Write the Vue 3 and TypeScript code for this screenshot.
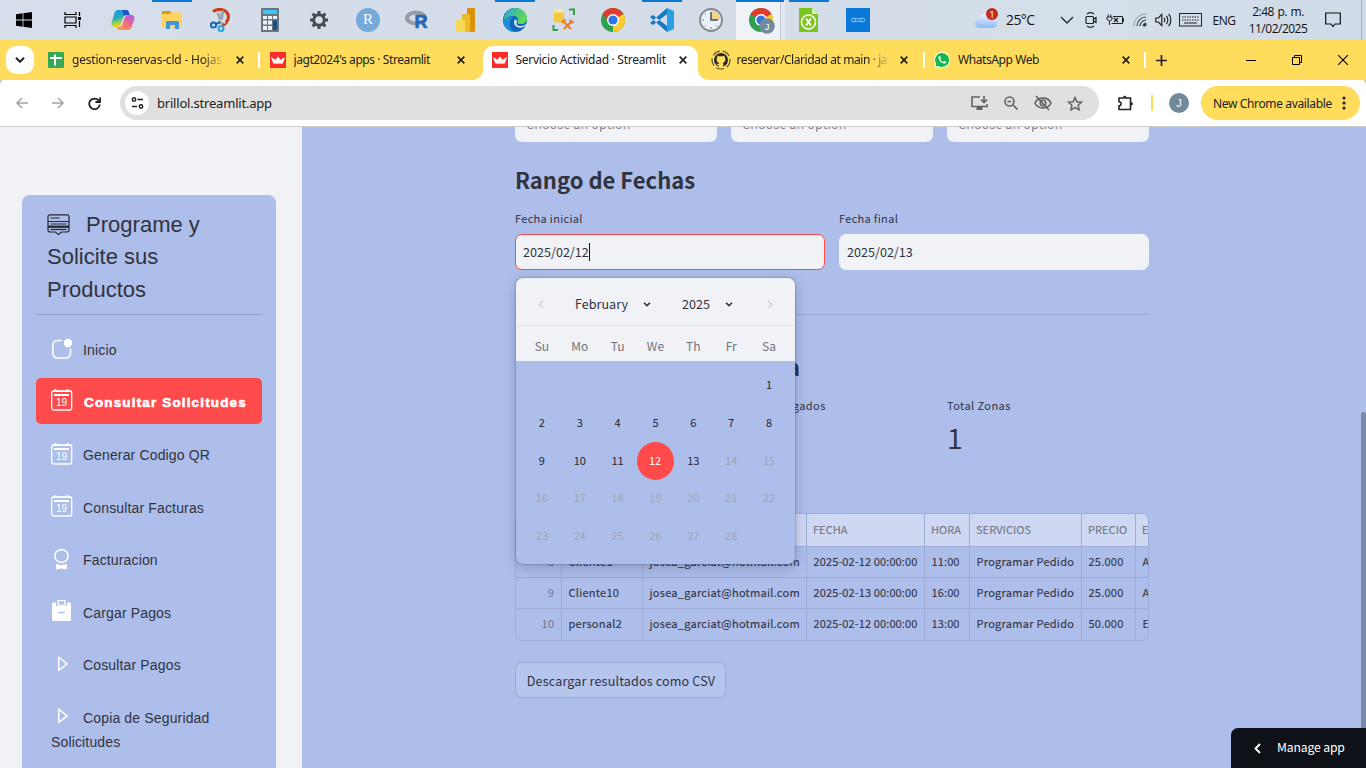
<script setup lang="ts">
interface Tab { title: string; icon: 'sheets' | 'streamlit' | 'github' | 'whatsapp'; active?: boolean; fade?: boolean }
interface MenuItem { label: string; icon: 'app' | 'date' | 'award' | 'clip' | 'play'; active?: boolean }

const tabs: Tab[] = [
  { title: 'gestion-reservas-cld - Hojas', icon: 'sheets', fade: true },
  { title: "jagt2024's apps · Streamlit", icon: 'streamlit' },
  { title: 'Servicio Actividad · Streamlit', icon: 'streamlit', active: true },
  { title: 'reservar/Claridad at main · ja', icon: 'github', fade: true },
  { title: 'WhatsApp Web', icon: 'whatsapp' },
]

const menu: MenuItem[] = [
  { label: 'Inicio', icon: 'app' },
  { label: 'Consultar Solicitudes', icon: 'date', active: true },
  { label: 'Generar Codigo QR', icon: 'date' },
  { label: 'Consultar Facturas', icon: 'date' },
  { label: 'Facturacion', icon: 'award' },
  { label: 'Cargar Pagos', icon: 'clip' },
  { label: 'Cosultar Pagos', icon: 'play' },
  { label: 'Copia de Seguridad Solicitudes', icon: 'play' },
]

const weekdays = ['Su', 'Mo', 'Tu', 'We', 'Th', 'Fr', 'Sa']
const blanks = 6
const days = Array.from({ length: 28 }, (_, i) => i + 1)

const headers = ['', 'NOMBRE', 'EMAIL', 'FECHA', 'HORA', 'SERVICIOS', 'PRECIO', 'ESTADO']
const rows = [
  ['8', 'Cliente1', 'josea_garciat@hotmail.com', '2025-02-12 00:00:00', '11:00', 'Programar Pedido', '25.000', 'A'],
  ['9', 'Cliente10', 'josea_garciat@hotmail.com', '2025-02-13 00:00:00', '16:00', 'Programar Pedido', '25.000', 'A'],
  ['10', 'personal2', 'josea_garciat@hotmail.com', '2025-02-12 00:00:00', '13:00', 'Programar Pedido', '50.000', 'E'],
]
</script>

<template>
  <div class="screen">
    <header class="taskbar">
      <div class="launch start">
        <svg width="16" height="16" viewBox="0 0 16 16"><path d="M0 2.2 6.6 1.3V7.5H0zM7.4 1.2 16 0V7.5H7.4zM0 8.4H6.6V14.7L0 13.8zM7.4 8.4H16V16L7.4 14.8z" fill="#000" /></svg>
      </div>
      <div class="launch view">
        <svg width="18" height="16" viewBox="0 0 18 16" fill="none" stroke="#000" stroke-width="1.2"><path d="M1 0V2.5H12V0M1 16V13.5H12V16M1 5H12V11H1zM15.5 0V4M15.5 9V15" /><path d="M14 5h3v3h-3z" fill="#000" stroke="none" /></svg>
      </div>
      <div class="launch">
        <svg width="24" height="24" viewBox="0 0 24 24">
          <defs>
            <linearGradient id="cpA" x1="0" y1="0" x2=".3" y2="1"><stop offset="0" stop-color="#1596e8" /><stop offset=".5" stop-color="#28a8c0" /><stop offset=".75" stop-color="#8fd04e" /><stop offset="1" stop-color="#ffd21f" /></linearGradient>
            <linearGradient id="cpB" x1=".8" y1="0" x2=".2" y2="1"><stop offset="0" stop-color="#b45be8" /><stop offset=".5" stop-color="#f06a86" /><stop offset="1" stop-color="#ff9a4a" /></linearGradient>
          </defs>
          <path d="M7 2h8c2 0 2.500 1 3 3l.6 2h-3c-2 0-3 1-3.600 3l-2 6c-.6 2-1.600 3-3.500 3H4c-2.500 0-4-2-3.200-5L3.500 5C4.200 3 5.200 2 7 2z" fill="url(#cpA)" />
          <path d="M17 22H9c-2 0-2.500-1-3-3h2c2 0 3-1 3.600-3l2-6c.6-2 1.600-3 3.400-3h3c2.500 0 4 2 3.200 5L20.500 19c-.7 2-1.700 3-3.500 3z" fill="url(#cpB)" />
          <path d="M11 2h4c2 0 2.500 1 3 3l.6 2h-3c-2 0-2 .5-2.600 1z" fill="#1953c4" />
        </svg>
      </div>
      <div class="launch running">
        <svg width="24" height="24" viewBox="0 0 24 24"><path d="M2 3h8l2 2v2H2z" fill="#dd9b10" /><path d="M2 6h7l2-1.500h11V20H2z" fill="#ffd45e" /><path d="M6 20v-6l1-1h11l1 1v7h-4v-4h-5v4H6z" fill="#3d94dc" /></svg>
      </div>
      <div class="launch">
        <svg width="24" height="24" viewBox="0 0 24 24" fill="none"><path d="M4 3.500c3-2 7-2.500 10-1.500 5 1.500 6.500 6 4.500 10.500-1 2-3 4-5 5" stroke="#c93c17" stroke-width="3" /><path d="M9 5l4 11M14 2.500L11.500 16" stroke="#9aa3ad" stroke-width="3" /><path d="M11.500 12l5 3" stroke="#d9dee4" stroke-width="2" /><circle cx="4.500" cy="17" r="2.600" stroke="#1768b5" stroke-width="2" /><path d="M7 16l4-2" stroke="#1768b5" stroke-width="2" /><circle cx="12" cy="20.500" r="2.500" stroke="#29a3e0" stroke-width="2" /></svg>
      </div>
      <div class="launch">
        <svg width="18" height="24" viewBox="0 0 18 24"><rect width="18" height="24" rx="1" fill="#68747f" /><path d="M2 2h14v4H2z" fill="#3ec6f2" /><path d="M2 8h4v3H2zM7 8h4v3H7zM12 8h4v3h-4zM2 12.500h4v4H2zM7 12.500h4v4H7zM2 18h4v4H2zM7 18h4v4H7z" fill="#eef1f4" /><path d="M12 12.500h4V22h-4z" fill="#164e87" /></svg>
      </div>
      <div class="launch">
        <svg width="20" height="20" viewBox="0 0 20 20" fill="none" stroke="#474b50"><circle cx="10" cy="10" r="5.300" stroke-width="3" /><path d="M10 1v3M10 16v3M1 10h3M16 10h3M3.600 3.600l2.200 2.200M14.200 14.200l2.200 2.200M3.600 16.400l2.200-2.200M14.200 5.800l2.200-2.200" stroke-width="3" /></svg>
      </div>
      <div class="launch"><span class="rstudio">R</span></div>
      <div class="launch">
        <svg width="24" height="22" viewBox="0 0 24 22"><ellipse cx="11" cy="9" rx="9" ry="5.500" fill="none" stroke="#969ca5" stroke-width="4" /><text x="9.500" y="19" font-family="Liberation Sans, sans-serif" font-weight="700" font-size="18" fill="#2468bd" stroke="#2468bd" stroke-width=".7">R</text></svg>
      </div>
      <div class="launch">
        <svg width="20" height="24" viewBox="0 0 20 24"><rect x="11" width="8" height="24" rx="1" fill="#d99309" /><rect x="6" y="6" width="8" height="18" rx="1" fill="#eebb28" /><rect y="12" width="9" height="12" rx="1" fill="#f9d858" /></svg>
      </div>
      <div class="launch running">
        <svg width="24" height="24" viewBox="0 0 24 24">
          <defs><linearGradient id="edA" x1="0" y1="0" x2="1" y2=".4"><stop offset="0" stop-color="#22a8d8" /><stop offset="1" stop-color="#62da56" /></linearGradient></defs>
          <circle cx="12" cy="12" r="12" fill="#0f65bb" /><path d="M1 9C3 2 8 0 12 0c7 0 12 5 12 10 0 4-3 6-6 6-2 0-4-.7-3.500-2 1.500-2 .5-6-4-6C6 8 1 10 0 15z" fill="url(#edA)" /><path d="M8 12c-3 4-1 10 5 12-7 0-12-4-13-10 1-4 6-6 10-5-1 1-2 2-2 3z" fill="#1c8fd8" /><path d="M24 14c-1 3-3 4-6 4-3 0-5-1-4.500-3 .8-1.200.5-3-1-4-2 1.500-2 5 0 7 3 2.500 7 2 10.500-.5z" fill="#d9e4ef" />
        </svg>
      </div>
      <div class="launch">
        <svg width="24" height="24" viewBox="0 0 24 24" fill="none"><path d="M2 3v10c0 2 10 2 10 0V3z" fill="#f5c93b" /><ellipse cx="7" cy="3" rx="5" ry="2" fill="#ffe79a" /><path d="M17 1.500h5V7M6 22H1.500v-5" stroke="#35a04a" stroke-width="2" /><path d="M11 13l8 8M20 13l-8 8" stroke="#ef7a20" stroke-width="2" /><path d="M9.500 14.500l4-3M18 11.500l1 2.500 3 .5" stroke="#ef7a20" stroke-width="2" /></svg>
      </div>
      <div class="launch">
        <svg width="24" height="24" viewBox="0 0 24 24"><circle cx="12" cy="12" r="12" fill="#2fa14e" /><path d="M12 12 1.600 6A12 12 0 0 1 22.400 6z" fill="#e33b2e" /><path d="M12 12 22.400 6A12 12 0 0 1 12 24z" fill="#fccb2f" /><path d="M12 12H6.500L1.600 6z" fill="#e33b2e" /><circle cx="12" cy="12" r="6" fill="#fff" /><circle cx="12" cy="12" r="4.600" fill="#2f75e8" /></svg>
      </div>
      <div class="launch running">
        <svg width="24" height="24" viewBox="0 0 24 24"><path d="M17 0l7 3v18l-7 3z" fill="#2b9fe6" /><path d="M17 0v6L3 17l-3-2z M17 24v-6L3 7 0 9z" fill="#1479c2" /></svg>
      </div>
      <div class="launch">
        <svg width="24" height="24" viewBox="0 0 24 24"><circle cx="12" cy="12" r="11" fill="#e9f0f7" stroke="#86898c" stroke-width="1.800" /><path d="M12 12V2.500a9.500 9.500 0 0 1 9.500 9.500z" fill="#f1d383" /><path d="M12 4v8h7" stroke="#46566b" stroke-width="1.500" fill="none" /><path d="M12 21v-2M3 12h2M5.500 5.500l1 1M5.500 18.500l1-1M18.500 18.500l-1-1" stroke="#6d7681" /></svg>
      </div>
      <div class="launch running current">
        <svg width="26" height="28" viewBox="0 0 26 28"><circle cx="12" cy="14" r="12" fill="#2fa14e" /><path d="M12 14 1.600 8A12 12 0 0 1 22.400 8z" fill="#e33b2e" /><path d="M12 14 22.400 8A12 12 0 0 1 12 26z" fill="#fccb2f" /><circle cx="12" cy="14" r="6" fill="#fff" /><circle cx="12" cy="14" r="4.600" fill="#2f75e8" /><circle cx="18" cy="20" r="7.800" fill="#71899a" /><text x="18" y="23.500" text-anchor="middle" font-family="Liberation Sans, sans-serif" font-size="9.500" fill="#fff">J</text></svg>
      </div>
      <div class="launch running">
        <svg width="20" height="24" viewBox="0 0 20 24"><path d="M0 0h13l6 6v18H0z" fill="#7bc51f" /><path d="M13 0l6 6h-6z" fill="#d8efb9" /><circle cx="9.500" cy="14" r="7" fill="none" stroke="#fff" stroke-width="1.500" /><path d="M7 10.500l5 7M12 10.500l-5 7" stroke="#fff" stroke-width="1.800" /></svg>
      </div>
      <div class="launch">
        <svg width="24" height="24" viewBox="0 0 24 24"><path d="M0 0h24v24H0z" fill="#0a78d8" /><g fill="none" stroke="#a8d2f5" stroke-width=".8"><circle cx="7.300" cy="12" r="1.900" /><circle cx="16.700" cy="12" r="1.900" /><path d="M8 10.200q4 1.500 8 0M8 13.800q4-1.500 8 0" /></g></svg>
      </div>

      <div class="tray">
        <svg width="26" height="24" viewBox="0 0 26 24"><defs><linearGradient id="cl" x1="0" y1="0" x2="0" y2="1"><stop offset="0" stop-color="#eaf3ff" /><stop offset="1" stop-color="#8fb9f2" /></linearGradient></defs><path d="M5 20a5 5 0 0 1 0-9 7 7 0 0 1 12-3c3-1 6 2 5 5 3 1 3 7-2 7z" fill="url(#cl)" /><circle cx="19" cy="6" r="6" fill="#c42b1f" /><text x="19" y="9.500" text-anchor="middle" font-family="Open Sans, sans-serif" font-size="9.500" fill="#fff">1</text></svg>
        <span class="temp">25°C</span>
        <svg width="14" height="8" viewBox="0 0 14 8" fill="none" stroke="#222" stroke-width="1.300"><path d="M1 1l6 6 6-6" /></svg>
        <svg width="14" height="16" viewBox="0 0 14 16" fill="none" stroke="#222" stroke-width="1.200"><rect x="2" y="4.500" width="7.500" height="7" rx="1" /><path d="M9.500 7l2.500-1.500v5L9.500 9M3 2c2-1.500 5-1.500 7 0M3 14c2 1.500 5 1.500 7 0" /></svg>
        <svg width="18" height="12" viewBox="0 0 18 12" fill="none" stroke="#222"><path d="M1 3h5v2.500L3.500 7 1 5.500zM2.200 3V.5M4.800 3V.5M3.500 7v4M7 2.500h9.500v7H5.500M16.500 4.500h1v3h-1" stroke-width="1" /><path d="M8 4l4 4M12 4L8 8" stroke-width="1.300" /></svg>
        <svg width="14" height="14" viewBox="0 0 14 14" fill="none" stroke="#555"><path d="M1 13C1 6 6 1 13 1" stroke="#999" /><path d="M4 13c0-5 4-9 9-9M7 13c0-3 3-6 6-6" stroke="#444" stroke-width="1.200" /><path d="M10 13c0-2 1-3 3-3v3z" fill="#222" /></svg>
        <svg width="17" height="14" viewBox="0 0 17 14" fill="none" stroke="#222" stroke-width="1.200"><path d="M.8 5h2.500l3.500-3.500v11L3.300 9H.8zM9 5c1 1 1 3 0 4M11.300 3c2 2 2 6 0 8M13.600 1c3 3 3 9 0 12" /></svg>
        <svg width="23" height="14" viewBox="0 0 23 14" fill="none" stroke="#222"><rect x=".5" y=".5" width="22" height="12.500" /><path d="M3 4h17M3 7h17" stroke-dasharray="1.500 1" /><path d="M5 10h13" /></svg>
        <span class="lang">ENG</span>
        <div class="clock"><span class="time">2:48 p. m.</span><span>11/02/2025</span></div>
        <svg width="16" height="16" viewBox="0 0 16 16" fill="none" stroke="#111" stroke-width="1.200"><path d="M.7 1h14.600v11H10l-2 2.500L6 12H.7z" /></svg>
      </div>
    </header>

    <div class="tabstrip">
      <button class="search-tabs"><svg width="10" height="6" viewBox="0 0 10 6" fill="none" stroke="#222" stroke-width="2"><path d="M1 .8l4 4 4-4" /></svg></button>
      <div v-for="tab in tabs" :key="tab.title" class="tab" :class="[tab.icon, { active: tab.active }]">
        <svg v-if="tab.icon === 'sheets'" class="fav" width="16" height="16" viewBox="0 0 16 16"><rect width="16" height="16" rx="1" fill="#34a853" /><path d="M2 6h12M7 2.500v11" stroke="#fff" stroke-width="2" /></svg>
        <svg v-else-if="tab.icon === 'streamlit'" class="fav" width="16" height="16" viewBox="0 0 16 16"><path d="M0 0h16v16H0z" fill="#ff2b2b" /><path d="M1 5.300l4.700 2.400L8 4.500l2.300 3.200L15 5.300 12.600 11.500H3.400z" fill="#ffd9d9" /><path d="M8 4.500l2.300 3.200L8 9 5.700 7.700zM1 5.300l7 4.200 7-4.200-2.400 6.200H3.400z" fill="#fff" opacity=".75" /></svg>
        <svg v-else-if="tab.icon === 'github'" class="fav gh" width="20" height="20" viewBox="0 0 20 20"><circle cx="10" cy="10" r="9" fill="none" stroke="#5c5430" stroke-width="1.200" stroke-dasharray="8 3" /><circle cx="10" cy="10" r="7" fill="#24292f" /><path d="M7.700 18v-3c-2 .3-2-1.500-3-1.500 1-.3 2 1 3 .5l.5-1C5.500 12.500 5 8.500 6.300 7.500l.2-2L8.200 6.300h3.600l1.700-.8.2 2c1.300 1 .8 5-1.900 5.500l.5 1.500V18z" fill="#ffdc5c" /></svg>
        <svg v-else class="fav" width="16" height="16" viewBox="0 0 16 16"><path d="M8 0a8 8 0 1 1-4 14.900L0 16l1.200-4A8 8 0 0 1 8 0z" fill="#fff" /><path d="M8 1a7 7 0 1 1-3.700 12.900L1.400 14.600l.8-2.800A7 7 0 0 1 8 1z" fill="#12b94b" /><path d="M5 4c-2 2 2 8 6 7.500 1.500-.5 1-2 .5-2L10 9l-1 1C7.500 9.500 6.500 8 6.500 7.500L7 6.500 6.300 4.500C6 4 5.500 3.800 5 4z" fill="#fff" /></svg>
        <span class="title" :class="{ fade: tab.fade }">{{ tab.title }}</span>
        <svg class="close" width="8" height="8" viewBox="0 0 8 8" stroke="#222" stroke-width="1.700"><path d="M.7.7l6.600 6.600M7.300.7L.7 7.300" /></svg>
      </div>
      <svg class="plus" width="11" height="11" viewBox="0 0 11 11" stroke="#222" stroke-width="1.700"><path d="M5.500 0v11M0 5.500h11" /></svg>
      <div class="window">
        <svg width="10" height="10" viewBox="0 0 10 10" stroke="#000"><path d="M0 5.500h10" /></svg>
        <svg width="10" height="10" viewBox="0 0 10 10" fill="none" stroke="#000"><path d="M.5 2.500h7v7h-7zM2.500 2.500v-2h7v7h-2" /></svg>
        <svg width="10" height="10" viewBox="0 0 10 10" stroke="#000" stroke-width="1.100"><path d="M0 0l10 10M10 0L0 10" /></svg>
      </div>
    </div>

    <div class="toolbar">
      <div class="nav">
        <svg width="12" height="12" viewBox="0 0 12 12" fill="none" stroke="#a2a2a2" stroke-width="1.500"><path d="M12 6H1M6 1L1 6l5 5" /></svg>
        <svg width="12" height="12" viewBox="0 0 12 12" fill="none" stroke="#a2a2a2" stroke-width="1.500"><path d="M0 6h11M6 1l5 5-5 5" /></svg>
        <svg width="13" height="13" viewBox="0 0 13 13" fill="none" stroke="#222" stroke-width="1.800"><path d="M11 4A5.300 5.300 0 1 0 11.800 7.500" /><path d="M12 .5V5H7.500" /></svg>
      </div>
      <div class="omnibox">
        <span class="site"><svg width="13" height="12" viewBox="0 0 13 12" fill="none" stroke="#222" stroke-width="1.500"><circle cx="3" cy="2.500" r="1.700" /><path d="M6.500 2.500H12M1 9.500h5" /><circle cx="10" cy="9.500" r="1.700" /></svg></span>
        <span class="url">brillol.streamlit.app</span>
        <div class="actions">
          <svg width="17" height="16" viewBox="0 0 17 16" fill="none" stroke="#606266" stroke-width="1.600"><path d="M9 2H1v9.500h15V9" /><path d="M5.500 13.500h6" stroke-width="3" /><path d="M13 1v6M10 4.500l3 3 3-3" /></svg>
          <svg width="14" height="14" viewBox="0 0 14 14" fill="none" stroke="#606266" stroke-width="1.600"><circle cx="5.500" cy="5.500" r="4.500" /><path d="M3.500 5.500h4M9 9l4.500 4.500" /></svg>
          <svg width="18" height="16" viewBox="0 0 18 16" fill="none" stroke="#606266" stroke-width="1.600"><path d="M1 8c3-6.500 13-6.500 16 0-3 6.500-13 6.500-16 0z" /><circle cx="9" cy="8" r="2.800" /><path d="M2 1l13 14" /></svg>
          <svg width="16" height="15" viewBox="0 0 16 15" fill="none" stroke="#606266" stroke-width="1.500"><path d="M8 1.500l1.900 4.200 4.600.5-3.400 3.100 1 4.500L8 11.500l-4.100 2.300 1-4.500L1.500 6.200l4.600-.5z" /></svg>
        </div>
      </div>
      <svg class="ext" width="17" height="17" viewBox="0 0 17 17" fill="none" stroke="#222" stroke-width="1.600"><path d="M2 3h11.500v11.500H2v-3.800c2.800 0 2.800-4 0-4z" /><path d="M6 2.500c0-2.500 3.500-2.500 3.500 0zM14 7c2.500 0 2.500 3.500 0 3.500z" fill="#222" stroke="none" /></svg>
      <span class="bar"></span>
      <span class="avatar">J</span>
      <div class="update"><span>New Chrome available</span><svg width="4" height="14" viewBox="0 0 4 14" fill="#222"><circle cx="2" cy="2" r="1.600" /><circle cx="2" cy="7" r="1.600" /><circle cx="2" cy="12" r="1.600" /></svg></div>
    </div>

    <div class="page">
      <aside class="sidebar">
        <nav class="menu">
          <h1>
            <svg width="23" height="22" viewBox="0 0 23 22" fill="none" stroke="#262730" stroke-width="1.200"><path d="M3 .8h17q2 0 2 2V16q0 2-2 2h-5.500L11.500 20.500 8.500 18H3q-2 0-2-2V2.800q0-2 2-2zM3.500 4h9M1 7.500h21M3.500 10h16M1 13.200h21" /><path d="M1 12.500h21" stroke-width="1.800" /><path d="M3.500 15.500h16" /></svg>
            Programe y Solicite sus Productos
          </h1>
          <hr />
          <a v-for="item in menu" :key="item.label" class="item" :class="{ active: item.active }">
            <svg v-if="item.icon === 'app'" class="ico" width="22" height="22" viewBox="0 0 22 22"><path d="M11 2.500H7Q1.800 2.500 1.800 7.500v7q0 5.500 5.200 5.500h7.500q5 0 5-5.500v-4" fill="none" stroke="#fff" stroke-width="1.600" /><circle cx="17" cy="5" r="4.200" fill="#fff" /></svg>
            <svg v-else-if="item.icon === 'date'" class="ico" width="22" height="22" viewBox="0 0 22 22"><rect x=".7" y="2" width="20" height="19" rx="2" fill="none" stroke="#fff" stroke-width="1.300" /><path d="M4.500 0v2M16.500 0v2" stroke="#fff" stroke-width="1.500" /><path d="M1 2.300h19.500" stroke="#fff" stroke-width="1.400" /><path d="M3 6h15" stroke="#fff" stroke-width="2" /><text x="10.500" y="17.200" text-anchor="middle" font-family="Liberation Sans, sans-serif" font-size="10" fill="#fff">19</text></svg>
            <svg v-else-if="item.icon === 'award'" class="ico" width="22" height="22" viewBox="0 0 22 22"><path d="M10.500 1.500l3 .8 2.600 1.900 1 3-.2 3-2 2.700-4.400 1.900-4.400-1.900-2-2.700-.2-3 1-3 2.600-1.900z" fill="none" stroke="#fff" stroke-width="1.500" /><path d="M5 16l5.500 1.200L16 16v5.500l-5.500-1-5.500 1z" fill="#fff" /></svg>
            <svg v-else-if="item.icon === 'clip'" class="ico" width="22" height="22" viewBox="0 0 22 22"><path d="M1 4q0-1.500 1.500-1.500H5V6h11V2.500h2.500Q20 2.500 20 4v15.500q0 1.500-1.500 1.500h-16Q1 21 1 19.500z" fill="#fff" /><path d="M7 .7h7v4.500H7z" fill="#adbeea" stroke="#fff" stroke-width="1.300" /><path d="M7 12.500h7" stroke="#adbeea" stroke-width="1.300" /></svg>
            <svg v-else class="ico" width="22" height="22" viewBox="0 0 22 22"><path d="M7.700 4v13.500l8.300-6.700z" fill="none" stroke="#fff" stroke-width="1.500" stroke-linejoin="round" /></svg>
            <span class="text">{{ item.label }}</span>
          </a>
        </nav>
      </aside>

      <main class="main">
        <div class="three">
          <div v-for="n in 3" :key="n" class="select"><span>Choose an option</span><svg width="8" height="6" viewBox="0 0 8 6" fill="none" stroke="#555" stroke-width="1.500"><path d="M1 1l3 3 3-3" /></svg></div>
        </div>
        <h3>Rango de Fechas</h3>
        <div class="two">
          <label>Fecha inicial<span class="input focus">2025/02/12<i class="caret"></i></span></label>
          <label>Fecha final<span class="input">2025/02/13</span></label>
        </div>
        <hr class="rule" />
        <h3 class="summary">Resumen de la Consulta</h3>
        <div class="three metrics">
          <div></div>
          <div class="metric"><span class="label">Total Encargados</span></div>
          <div class="metric"><span class="label">Total Zonas</span><span class="value">1</span></div>
        </div>
        <div class="table">
          <div class="tr head"><span v-for="h in headers" :key="h">{{ h }}</span></div>
          <div v-for="row in rows" :key="row[0]" class="tr"><span v-for="(cell, c) in row" :key="c">{{ cell }}</span></div>
        </div>
        <button class="download">Descargar resultados como CSV</button>

        <div class="calendar">
          <div class="cal-head">
            <svg width="6" height="9" viewBox="0 0 6 9" fill="none" stroke="#d3d6e2" stroke-width="1.700"><path d="M5 .8L1.200 4.500 5 8.200" /></svg>
            <span class="month">February</span>
            <svg class="dd" width="8" height="5" viewBox="0 0 8 5" fill="none" stroke="#31333f" stroke-width="1.500"><path d="M1 .8l3 2.800 3-2.800" /></svg>
            <span class="year">2025</span>
            <svg class="dd" width="8" height="5" viewBox="0 0 8 5" fill="none" stroke="#31333f" stroke-width="1.500"><path d="M1 .8l3 2.800 3-2.800" /></svg>
            <svg class="next" width="6" height="9" viewBox="0 0 6 9" fill="none" stroke="#d3d6e2" stroke-width="1.700"><path d="M1 .8l3.800 3.700L1 8.200" /></svg>
          </div>
          <div class="week"><span v-for="d in weekdays" :key="d">{{ d }}</span></div>
          <div class="days">
            <span v-for="b in blanks" :key="'b' + b"></span>
            <span v-for="d in days" :key="d" :class="{ off: d > 13, sel: d === 12 }">{{ d }}</span>
          </div>
        </div>
      </main>
      <div class="scrollbar"></div>
      <button class="manage"><svg width="7" height="11" viewBox="0 0 7 11" fill="none" stroke="#fff" stroke-width="1.900"><path d="M6 1L1.500 5.500 6 10" /></svg><span>Manage app</span></button>
    </div>
  </div>
</template>

<style>
body { margin: 0; overflow: hidden; }
</style>

<style scoped>
* { box-sizing: border-box; }
.screen { width: 1366px; height: 768px; display: flex; flex-direction: column; overflow: hidden; background: #adbeea; font-family: "Noto Sans CJK SC", "Open Sans", sans-serif; color: #31333f; }
svg { display: block; flex: none; }
button { border: 0; padding: 0; font: inherit; color: inherit; }

.taskbar { flex: none; height: 40px; display: flex; background: linear-gradient(90deg, #d5deea, #d3dce7 50%, #d5dfea 80%, #cfdbe8); font-family: "Open Sans", sans-serif; color: #111; }
.launch { position: relative; flex: none; width: 49px; height: 40px; display: flex; align-items: center; justify-content: center; }
.launch.start { width: 48px; }
.launch.view { width: 50.500px; }
.running::before { content: ""; position: absolute; top: 0; left: 4px; width: 40px; height: 2px; background: #0b78d4; }
.current { padding-left: 3px; background: linear-gradient(90deg, #eff2f6 44px, #c3cad4 44px, #c3cad4 45px, #e2e8ef 45px); }
.current::before { left: 0; width: 48px; }
.rstudio { width: 24px; height: 24px; border-radius: 50%; background: #75aadb; color: #fff; font: 15px/23px "Liberation Serif", serif; text-align: center; }
.tray { margin-left: auto; width: 394px; height: 40px; display: grid; grid-template-columns: 28px 54px 26px 22px 26px 24px 22px 32px 36px 72px 38px; justify-content: start; align-items: center; justify-items: center; background: linear-gradient(#a9b5c3, #a9b5c3) 389px 0 / 1px 40px no-repeat; }
.temp { justify-self: start; padding-left: 6px; font-size: 14px; letter-spacing: -.6px; line-height: 20px; }
.lang { font-size: 12px; letter-spacing: -.5px; }
.clock { display: flex; flex-direction: column; align-items: center; font-size: 12px; line-height: 17.500px; letter-spacing: -.5px; white-space: nowrap; }
.time { word-spacing: 1px; }

.tabstrip { flex: none; height: 40px; display: flex; align-items: center; background: #ffdc5c; font-family: "Noto Sans", sans-serif; font-size: 12px; color: #222; }
.search-tabs { width: 28px; height: 28px; margin: 0 6px; border-radius: 10px; background: #fff; display: flex; align-items: center; justify-content: center; }
.tab { position: relative; flex: none; width: 221.500px; height: 34px; margin-top: 6px; padding: 0 0 6px 8px; display: flex; align-items: center; }
.tab .title { margin-left: 8px; width: 152px; overflow: hidden; white-space: nowrap; line-height: 20px; letter-spacing: -.42px; }
.tab.active { padding-left: 8.500px; }
.tab.active .title { letter-spacing: -.28px; }
.tab.sheets .title { letter-spacing: -.2px; }
.title.fade { -webkit-mask-image: linear-gradient(90deg, #000 86%, transparent 101%); mask-image: linear-gradient(90deg, #000 86%, transparent 101%); }
.tab .close { margin-left: 11.500px; }
.tab.github .fav { margin: 0 -2px; }
.tab.sheets::after, .tab.github::after, .tab.whatsapp::after { content: ""; position: absolute; left: 218px; top: 6px; width: 2px; height: 16px; background: #fff; }
.tab.active::before { content: ""; position: absolute; z-index: 0; left: 0; top: 0; width: 214.500px; height: 34px; border-radius: 10px 10px 0 0; background: #fff; }
.tab.active::after { content: ""; position: absolute; left: -10px; bottom: 0; width: 234.500px; height: 10px; background: radial-gradient(circle at 0 0, transparent 9.500px, #fff 10px) left / 10px 10px no-repeat, radial-gradient(circle at 100% 0, transparent 9.500px, #fff 10px) right / 10px 10px no-repeat; }
.tab > * { position: relative; z-index: 1; }
.plus { margin-left: 8px; }
.window { margin-left: auto; display: flex; gap: 36px; padding-right: 18px; }

.toolbar { flex: none; height: 47px; display: flex; align-items: center; background: #fff; border-bottom: 1px solid #c9ccd0; font-family: "Noto Sans", sans-serif; color: #202124; border-radius: 5px 5px 0 0; box-shadow: 0 -6px 0 -1px #ffdc5c; }
.nav { width: 120px; padding-left: 16px; display: flex; gap: 24px; align-items: center; }
.omnibox { width: 979px; height: 34px; padding: 0 15px 0 5px; display: flex; align-items: center; border-radius: 17px; background: #e0e0e0; }
.site { width: 24px; height: 24px; border-radius: 50%; background: #fff; display: flex; align-items: center; justify-content: center; }
.url { margin-left: 8px; font-size: 13px; letter-spacing: -.2px; }
.actions { margin-left: auto; width: 130px; display: grid; grid-template-columns: repeat(4, 32px); justify-items: center; align-items: center; justify-content: end; margin-right: -7px; }
.ext { margin-left: 18px; }
.bar { width: 2px; height: 16px; margin-left: 17px; background: #ffdc5c; }
.avatar { width: 20px; height: 20px; margin-left: 16px; border-radius: 50%; background: #71899a; color: #fff; font: 11px/20px "Liberation Sans", sans-serif; text-align: center; }
.update { width: 159px; height: 34px; margin-left: 12px; padding: 0 14px 0 12px; display: flex; align-items: center; justify-content: space-between; border-radius: 17px; background: #ffdc5c; font-size: 12px; letter-spacing: -.36px; white-space: nowrap; }

.page { position: relative; height: 641px; display: flex; overflow: hidden; }
.sidebar { flex: none; width: 302px; height: 641px; padding: 68px 26px 0 22px; background: #f0f2f6; }
.menu { height: 700px; padding: 14px 14px 0; border-radius: 8px; background: #adbeea; font-family: "Liberation Sans", sans-serif; }
.menu h1 { margin: 0; padding: 0 11px; font-size: 22px; font-weight: 400; line-height: 32.300px; letter-spacing: 0; }
.menu h1 svg { display: inline-block; margin-right: 10px; vertical-align: -4px; }
.menu hr { height: 1px; margin: 8px 0 11px; border: 0; background: #8f9fc9; }
.item { display: block; width: 226px; min-height: 46px; margin-bottom: 6.500px; padding: 12.500px 15px 9px; border-radius: 5px; font-size: 14px; line-height: 24px; letter-spacing: .15px; }
.ico { display: inline-block; margin: -9px 10px -6px 0; vertical-align: 1.500px; }
.item.active { background: #ff4b4b; color: #fff; font-weight: 700; font-size: 13.500px; letter-spacing: 1.150px; white-space: nowrap; -webkit-text-stroke: .6px #fff; }
.item.active .ico { margin-right: 11px; -webkit-text-stroke: 0; letter-spacing: 0; font-weight: 400; }
.ico text { letter-spacing: 0; }

.main { position: relative; width: 634px; margin-left: 213px; }
.three { display: grid; grid-template-columns: repeat(3, 1fr); gap: 14px; }
.select { height: 36px; margin-top: -21px; padding: 0 16px 2px 11px; display: flex; align-items: center; justify-content: space-between; border-radius: 7px; background: #f0f2f6; font-size: 12.600px; letter-spacing: .1px; color: #85868e; }
h3 { margin: 20px 0 0; font-size: 22px; font-weight: 600; line-height: 34px; }
.two { display: grid; grid-template-columns: 1fr 1fr; gap: 14px; margin-top: 13px; }
label { display: block; font-size: 11px; line-height: 18px; letter-spacing: .32px; }
.input { display: flex; align-items: center; height: 36px; margin-top: 7px; padding: 0 7px; border: 1px solid #f0f2f6; border-radius: 7px; background: #f0f2f6; font-size: 12.600px; letter-spacing: 0; }
.input.focus { border-color: #ff4b4b; }
.caret { width: 1px; height: 18px; background: #111; }
.rule { height: 1px; margin: 44px 0 0; border: 0; background: #99a6ce; }
.summary { margin-top: 34px; width: 285px; text-align: right; white-space: nowrap; }
.metrics { margin-top: 13px; height: 80px; }
.metric { display: flex; flex-direction: column; }
.label { font-size: 11px; line-height: 18px; letter-spacing: .44px; }
.value { margin-top: -1px; font-size: 28px; line-height: 48px; }
.table { height: 128px; margin-top: 37px; border: 1px solid #9faed8; border-radius: 7px; overflow: hidden; font-size: 11px; }
.tr { display: grid; grid-template-columns: 46px 81px 164px 118px 45px 112px 54px 60px; height: 31.300px; line-height: 29px; border-bottom: 1px solid #9eadd7; }
.tr:last-child { border-bottom: 0; }
.tr span { padding-left: 6.500px; border-right: 1px solid #9eadd7; white-space: nowrap; letter-spacing: .12px; -webkit-text-stroke: .1px currentColor; }
.tr:not(.head) span:nth-child(2), .tr:not(.head) span:nth-child(3), .tr:not(.head) span:nth-child(6) { letter-spacing: .27px; }
.tr:not(.head) span:nth-child(7) { letter-spacing: .25px; }
.tr span:first-child { padding: 0 7px 0 0; text-align: right; color: #6f7791; -webkit-text-stroke: 0; }
.tr.head { height: 32.700px; line-height: 31px; background: #ced8f2; color: #717582; }
.tr.head span { padding-left: 6px; letter-spacing: .05px; }
.download { display: block; width: 211px; height: 36px; margin-top: 21px; padding: 0 0 0 1px; border: 1px solid #9caad2; border-radius: 7px; background: #b6c5ee; font-size: 12.600px; letter-spacing: .15px; line-height: 33px; white-space: nowrap; }

.calendar { position: absolute; left: 1px; top: 151px; width: 279px; height: 286px; border-radius: 7px; background: #adbeea; box-shadow: 0 0 2px rgba(40, 60, 110, .7), 0 4px 14px rgba(14, 17, 60, .22); overflow: hidden; }
.cal-head { height: 48px; padding: 6px 22px 0; display: flex; align-items: center; background: #f0f2f6; border-bottom: 1px solid #e6e8ef; font-size: 12.600px; }
.month { width: 55px; margin-left: 31px; }
.cal-head .dd { margin-left: 13px; }
.year { width: 30px; margin-left: 31px; }
.cal-head span { margin-top: -2px; }
.cal-head .next { margin-left: auto; }
.week, .days { display: grid; grid-template-columns: repeat(7, 37.850px); padding: 0 7px; text-align: center; }
.week { height: 35px; padding-top: 6px; background: #f0f2f6; font-size: 12px; line-height: 27px; color: #72747d; }
.days { padding-top: 5px; grid-auto-rows: 37.800px; line-height: 37px; font-size: 11px; color: #262730; }
.days .off { color: #a1a6b5; }
.days .sel { height: 38px; width: 37px; border-radius: 50%; background: #ff4b4b; color: #fff; }
.scrollbar { position: absolute; right: 0; top: 285px; width: 5px; height: 400px; border-radius: 3px 3px 0 0; background: #7d88a8; }
.manage { position: absolute; right: 0; bottom: 0; width: 135px; height: 40px; padding-left: 23px; display: flex; align-items: center; gap: 16px; border-radius: 7px 0 0 0; background: #0e1117; color: #fff; font-size: 12.200px; letter-spacing: -.15px; }
.manage span { margin-top: -2px; }
</style>
